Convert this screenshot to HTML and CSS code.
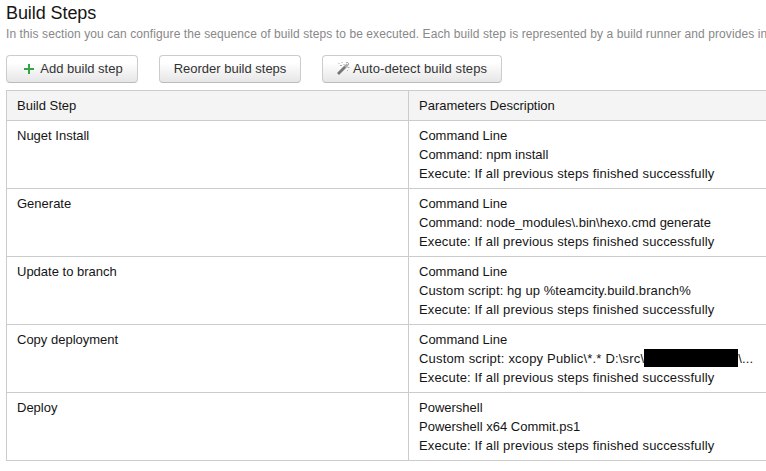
FILE: index.html
```html
<!DOCTYPE html>
<html lang="en">
  <head>
    <meta charset="utf-8">
    <title>Build Steps</title>
    <link rel="stylesheet" href="styles.css">
  </head>
  <body>
    <h2>Build Steps</h2>
    <p class="description">In this section you can configure the sequence of build steps to be executed. Each build step is represented by a build runner and provides in</p>

    <div class="actions">
      <button class="btn btn-add">
        <svg class="add-icon" viewBox="0 0 10 10">
          <path d="M4 0h2v4h4v2H6v4H4V6H0V4h4z" />
        </svg>
        <span>Add build step</span>
      </button>
      <button class="btn btn-reorder"><span>Reorder build steps</span></button>
      <button class="btn btn-detect">
        <svg class="wand-icon" viewBox="0 0 13 13">
          <path class="wand" d="M1 12L8.5 4.5" />
          <path class="wand-tip" d="M8 5l2.6-2.6" />
          <path class="sparks" d="M1.5 1.5h1M4.5 .5h1M6.5 2.5h1M3 3.5h2M9 .5h2M11.5 1v2M10.5 5.5h2M10 8.5h1" />
        </svg>
        <span>Auto-detect build steps</span>
      </button>
    </div>

    <table class="steps">
      <thead>
        <tr>
          <th class="step-name">Build Step</th>
          <th>Parameters Description</th>
        </tr>
      </thead>
      <tbody>
        <tr>
          <td>Nuget Install</td>
          <td>
            <div>Command Line</div>
            <div>Command: npm install</div>
            <div class="execute">Execute: If all previous steps finished successfully</div>
          </td>
        </tr>
        <tr>
          <td>Generate</td>
          <td>
            <div>Command Line</div>
            <div>Command: node_modules\.bin\hexo.cmd generate</div>
            <div class="execute">Execute: If all previous steps finished successfully</div>
          </td>
        </tr>
        <tr>
          <td>Update to branch</td>
          <td>
            <div>Command Line</div>
            <div class="script">Custom script: hg up %teamcity.build.branch%</div>
            <div class="execute">Execute: If all previous steps finished successfully</div>
          </td>
        </tr>
        <tr>
          <td>Copy deployment</td>
          <td>
            <div>Command Line</div>
            <div class="script-line">Custom script: xcopy Public\*.* D:\src\<span class="redacted"></span>\...</div>
            <div class="execute">Execute: If all previous steps finished successfully</div>
          </td>
        </tr>
        <tr>
          <td>Deploy</td>
          <td>
            <div>Powershell</div>
            <div>Powershell x64 Commit.ps1</div>
            <div class="execute">Execute: If all previous steps finished successfully</div>
          </td>
        </tr>
      </tbody>
    </table>
  </body>
</html>
```
FILE: styles.css
```css
body {
  margin: 0;
  padding: 2px 0 0 6px;
  overflow: hidden;
  background: #fff;
  color: #151515;
  font-family: "Liberation Sans", Arial, sans-serif;
  font-size: 13px;
  line-height: 19px;
}
h2 {
  margin: 0;
  font-size: 18px;
  font-weight: normal;
  line-height: 22px;
  letter-spacing: -0.08px;
}
.description {
  margin: 1px 0 0;
  color: #888;
  font-size: 12px;
  letter-spacing: 0.09px;
  white-space: nowrap;
}
.actions {
  display: flex;
  gap: 21px;
  margin: 11px 0 7px;
}
.btn {
  box-sizing: border-box;
  display: flex;
  align-items: center;
  justify-content: center;
  height: 28px;
  padding: 0 0 1px;
  border: 1px solid #ccc;
  border-bottom-color: #bbb;
  border-radius: 4px;
  background: linear-gradient(#fff, #fff 25%, #e6e6e6);
  color: #333;
  font: inherit;
  white-space: nowrap;
}
.btn-add {
  width: 132px;
  gap: 6px;
  padding-left: 3px;
}
.btn-reorder {
  width: 142px;
}
.btn-detect {
  width: 180px;
  gap: 3px;
  letter-spacing: 0.08px;
}
.add-icon {
  width: 10px;
  height: 10px;
  fill: #34a447;
}
.wand-icon {
  width: 13px;
  height: 13px;
  fill: none;
}
.wand {
  stroke: #777;
  stroke-width: 2.8;
}
.wand-tip {
  stroke: #aaa;
  stroke-width: 2.8;
}
.sparks {
  stroke: #aaa;
}
.steps {
  width: 760px;
  border-collapse: collapse;
  border-right: hidden;
  table-layout: fixed;
}
.steps th,
.steps td {
  padding: 5px 10px;
  border: 1px solid #ccc;
  font-weight: normal;
  text-align: left;
  vertical-align: top;
  white-space: nowrap;
}
.steps th {
  background: #f4f4f4;
}
.steps .step-name {
  width: 381px;
}
.execute {
  letter-spacing: 0.15px;
}
.script {
  letter-spacing: 0.09px;
}
.script-line {
  display: flex;
  letter-spacing: 0.18px;
}
.redacted {
  width: 94px;
  height: 18px;
  background: #000;
}
```
